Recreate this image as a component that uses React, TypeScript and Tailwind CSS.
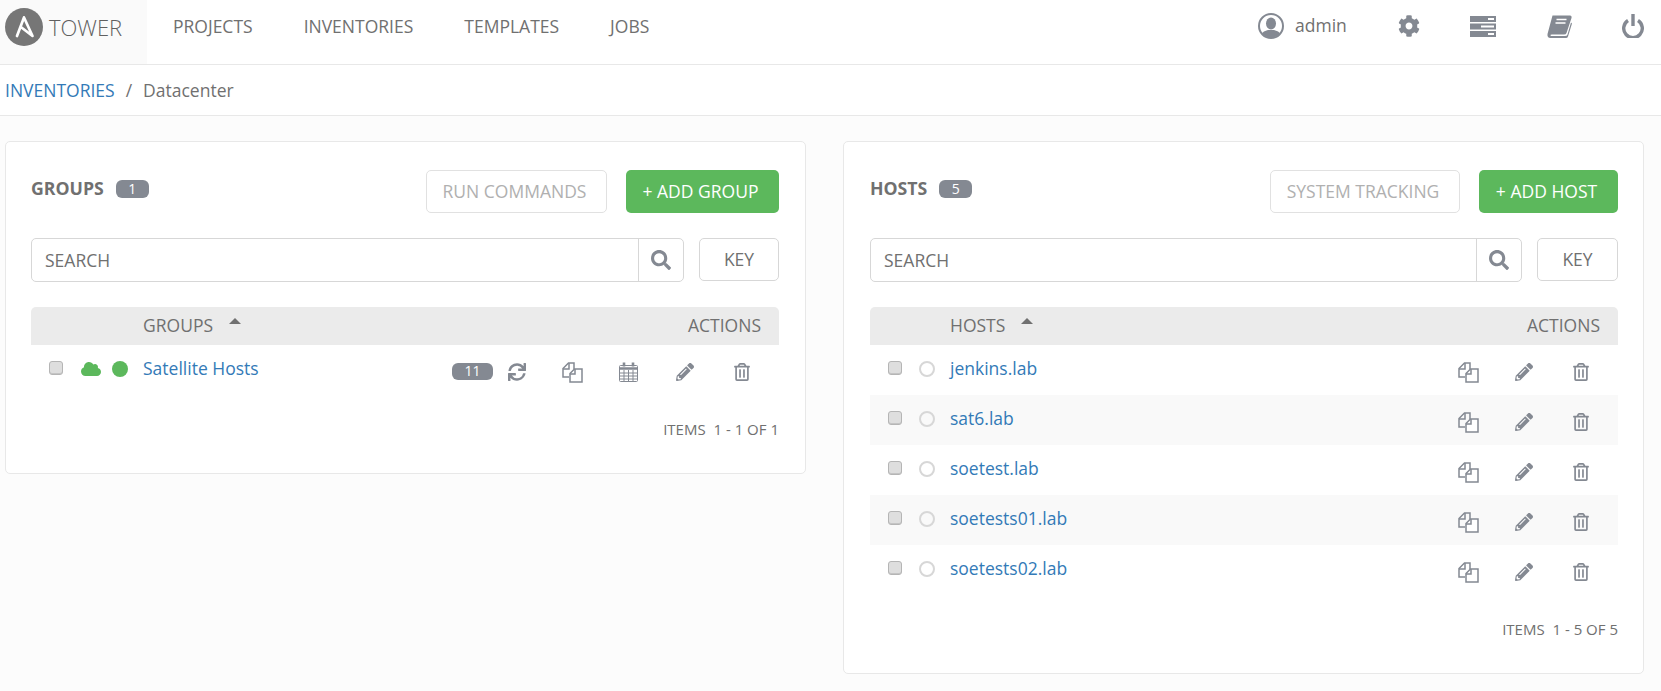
import { FaCloud, FaSearch, FaCog, FaPencilAlt, FaSync, FaRegTrashAlt } from "react-icons/fa"

const font = "font-['Open_Sans',sans-serif]"

function CopyIcon() {
  return (
    <svg width="21" height="21" viewBox="0 0 21 21" fill="none" stroke="#848992" strokeWidth="1.5">
      <path d="M7 15H1V6.500L6.500 1H12v6" />
      <path d="M1 7h6V1" />
      <path d="M8 20V11.500L12.500 7H20v13z" fill="#fff" />
      <path d="M8 12h5V7" />
    </svg>
  )
}

function CalendarIcon() {
  return (
    <svg width="19" height="20" viewBox="0 0 19 20" fill="none" stroke="#848992" strokeWidth="1">
      <rect x="0.5" y="3.500" width="18" height="16" rx="1" />
      <path d="M0 6.500h19" strokeWidth="2.500" />
      <path d="M1 11h17M1 14h17M1 17h17M5 8v11M9.500 8v11M14 8v11" />
      <path d="M5 0.500v4M14 0.500v4" strokeWidth="2.600" />
    </svg>
  )
}

function ServerIcon() {
  return (
    <svg width="26" height="21" viewBox="0 0 26 21">
      <rect y="0" width="26" height="6" fill="#848992" />
      <rect y="7.500" width="26" height="6" fill="#848992" />
      <rect y="15" width="26" height="6" fill="#848992" />
      <rect x="18" y="2" width="6" height="2" fill="#fff" />
      <rect x="11" y="9.500" width="13" height="2" fill="#fff" />
      <rect x="18" y="17" width="6" height="2" fill="#fff" />
    </svg>
  )
}

function BookIcon() {
  return (
    <svg width="25" height="23" viewBox="0 0 25 23">
      <path
        fill="#848992"
        d="M5.500 0.500H23Q25 0.500 24.500 3L19.500 18Q19 19.500 17 19.500H5Q3 19.500 3.500 20.500Q3.800 21 5 21H18Q20 21 20.500 19.500L24 7.500 25 8.500 21 21.500Q20.500 23 19 23H3.500Q0 23 0.500 19Z"
      />
      <path stroke="#fff" strokeWidth="1.600" d="M9.500 4.500H19.500M8.500 8H18.500" />
    </svg>
  )
}

function PowerIcon() {
  return (
    <svg width="22" height="24" viewBox="0 0 22 24" fill="none" stroke="#848992" strokeWidth="3.400">
      <path d="M6 6.500a9.300 9.300 0 1 0 10 0" />
      <path d="M11 0v12" />
    </svg>
  )
}

function UserIcon() {
  return (
    <svg width="26" height="26" viewBox="0 0 26 26">
      <defs>
        <clipPath id="user-clip">
          <circle cx="13" cy="13" r="11.500" />
        </clipPath>
      </defs>
      <circle cx="13" cy="13" r="12" fill="none" stroke="#848992" strokeWidth="2" />
      <g clipPath="url(#user-clip)" fill="#848992">
        <ellipse cx="13" cy="10.500" rx="5" ry="6" />
        <path d="M2 26c0-6 4-8 8-9h6c4 1 8 3 8 9z" />
      </g>
    </svg>
  )
}

function AnsibleLogo() {
  return (
    <svg width="38" height="38" viewBox="0 0 38 38">
      <circle cx="19" cy="19" r="19" fill="#767676" />
      <path
        d="M19 9.500 12 28M19 9.500 27.500 28 16.500 19.500"
        fill="none"
        stroke="#fff"
        strokeWidth="2.700"
        strokeLinejoin="round"
        strokeLinecap="round"
      />
    </svg>
  )
}

function Badge({ children, className }: { children: string; className: string }) {
  return (
    <span className={`flex items-center justify-center rounded-[6px] bg-[#848992] text-[14px] leading-none text-white ${className}`}>
      {children}
    </span>
  )
}

function Checkbox() {
  return (
    <span className="mt-[-4px] block h-[14px] w-[14px] rounded-[3px] border border-[#b5b5b5] bg-[#dedede] shadow-[inset_0_-1px_0_#c4c4c4]" />
  )
}

function RowActions({ group }: { group?: boolean }) {
  return (
    <div className="mt-[4px] flex items-center text-[#848992]">
      {group && (
        <>
          <Badge className="mt-[-2px] h-[17px] w-[41px]">11</Badge>
          <span className="ml-[15px] w-[54px]"><FaSync size={18} /></span>
        </>
      )}
      <span className="w-[57px]"><CopyIcon /></span>
      {group && <span className="w-[57px]"><CalendarIcon /></span>}
      <span className="w-[57px]"><FaPencilAlt size={18} /></span>
      <span className="w-[17px]"><FaRegTrashAlt size={18} /></span>
    </div>
  )
}

function Card({
  title,
  count,
  outlineLabel,
  outlineWidth,
  addLabel,
  addWidth,
  searchWidth,
  keyWidth,
  nameCol,
  items,
  className,
  children,
}: {
  title: string
  count: string
  outlineLabel: string
  outlineWidth: string
  addLabel: string
  addWidth: string
  searchWidth: string
  keyWidth: string
  nameCol: string
  items: string
  className: string
  children: React.ReactNode
}) {
  return (
    <section className={`rounded-[5px] border border-[#e8e8e8] bg-white pt-[28px] ${className}`}>
      <div className="flex h-[43px] items-start">
        <h2 className="mt-[8px] text-[17.7px] leading-[20px] font-bold text-[#707070]">{title}</h2>
        <Badge className="mt-[10px] ml-[12px] h-[18px] w-[33px]">{count}</Badge>
        <button className={`ml-auto h-[43px] rounded-[5px] border border-[#e1e1e1] pr-[4px] text-[17.5px] text-[#b0b0b0] ${outlineWidth}`}>
          {outlineLabel}
        </button>
        <button className={`ml-[19px] h-[43px] rounded-[5px] bg-[#5cb85c] pr-[4px] text-[17.5px] text-white ${addWidth}`}>
          {addLabel}
        </button>
      </div>
      <div className="mt-[25px] flex h-[44px] items-start justify-between">
        <div className={`flex h-[44px] rounded-[5px] border border-[#d7d7d7] ${searchWidth}`}>
          <span className="flex-1 pl-[13px] text-[17.5px] leading-[42px] text-[#707070]">SEARCH</span>
          <span className="flex w-[45px] items-center justify-center border-l border-[#d7d7d7] text-[#848992]">
            <FaSearch size={20} />
          </span>
        </div>
        <button className={`h-[43px] rounded-[5px] border border-[#d7d7d7] text-[17.5px] text-[#707070] ${keyWidth}`}>KEY</button>
      </div>
      <div className="mt-[25px] flex h-[38px] items-center rounded-t-[5px] bg-[#ebebeb] pr-[18px] text-[17.5px] text-[#707070]">
        <span className={`${nameCol} mt-[-2px]`}>{title}</span>
        <span className="ml-[16px] mb-[10px] block h-0 w-0 border-x-[6px] border-b-[6px] border-x-transparent border-b-[#707070]" />
        <span className="ml-auto mt-[-2px]">ACTIONS</span>
      </div>
      {children}
      <div className="mt-[24px] text-right text-[15px] leading-[20px] whitespace-pre text-[#707070]">{items}</div>
    </section>
  )
}

const hosts = ["jenkins.lab", "sat6.lab", "soetest.lab", "soetests01.lab", "soetests02.lab"]

export default function App() {
  return (
    <div className={`min-h-[691px] bg-[#fcfcfc] ${font}`}>
      <header className="flex h-[65px] border-b border-[#e8e8e8] bg-white">
        <div className="flex w-[147px] items-start bg-[#fafafa] pt-[8px] pl-[5px]">
          <AnsibleLogo />
          <span className="ml-[6px] mt-[5px] text-[22px] leading-[28px] font-light text-[#606060]">TOWER</span>
        </div>
        <nav className="ml-[26px] flex h-[53px] items-center gap-[51px] text-[17.5px] text-[#707070]">
          <span>PROJECTS</span>
          <span>INVENTORIES</span>
          <span>TEMPLATES</span>
          <span>JOBS</span>
        </nav>
        <div className="ml-auto flex h-[52px] items-center pr-[17px] text-[#848992]">
          <UserIcon />
          <span className="ml-[11px] mt-[-2px] w-[103px] text-[17.5px] text-[#707070]">admin</span>
          <span className="w-[72px]"><FaCog size={22} /></span>
          <span className="w-[77px]"><ServerIcon /></span>
          <span className="w-[75px]"><BookIcon /></span>
          <PowerIcon />
        </div>
      </header>
      <div className="flex h-[51px] items-center border-b border-[#e8e8e8] bg-white pl-[5px] text-[17.5px]">
        <span className="text-[#337ab7]">INVENTORIES</span>
        <span className="ml-[11px] text-[#707070]">/</span>
        <span className="ml-[11px] text-[#707070]">Datacenter</span>
      </div>
      <main className="flex items-start pt-[25px] pl-[5px]">
        <Card
          className="h-[333px] w-[801px] pr-[26px] pl-[25px]"
          title="GROUPS"
          count="1"
          outlineLabel="RUN COMMANDS"
          outlineWidth="w-[181px]"
          addLabel="+ ADD GROUP"
          addWidth="w-[153px]"
          searchWidth="w-[653px]"
          keyWidth="w-[80px]"
          nameCol="ml-[112px]"
          items="ITEMS  1 - 1 OF 1"
        >
          <div className="flex h-[50px] items-center pl-[18px] pr-[29px]">
            <Checkbox />
            <span className="ml-[18px] mt-[-3px] text-[#5cb85c]"><FaCloud size={20} /></span>
            <span className="ml-[11px] mt-[-2px] h-[16px] w-[16px] rounded-full bg-[#5cb85c]" />
            <span className="ml-[15px] mt-[-3px] text-[17.5px] text-[#337ab7]">Satellite Hosts</span>
            <div className="ml-auto"><RowActions group /></div>
          </div>
        </Card>
        <Card
          className="ml-[37px] h-[533px] w-[801px] pr-[25px] pl-[26px]"
          title="HOSTS"
          count="5"
          outlineLabel="SYSTEM TRACKING"
          outlineWidth="w-[190px]"
          addLabel="+ ADD HOST"
          addWidth="w-[139px]"
          searchWidth="w-[652px]"
          keyWidth="w-[81px]"
          nameCol="ml-[80px]"
          items="ITEMS  1 - 5 OF 5"
        >
          {hosts.map((host, i) => (
            <div key={host} className={`flex h-[50px] items-center pl-[18px] pr-[29px] ${i % 2 === 1 ? "bg-[#f9f9f9]" : ""}`}>
              <Checkbox />
              <span className="ml-[17px] mt-[-2px] h-[16px] w-[16px] rounded-full border-2 border-[#d7d7d7]" />
              <span className="ml-[15px] mt-[-3px] text-[17.5px] text-[#337ab7]">{host}</span>
              <div className="ml-auto"><RowActions /></div>
            </div>
          ))}
        </Card>
      </main>
    </div>
  )
}
